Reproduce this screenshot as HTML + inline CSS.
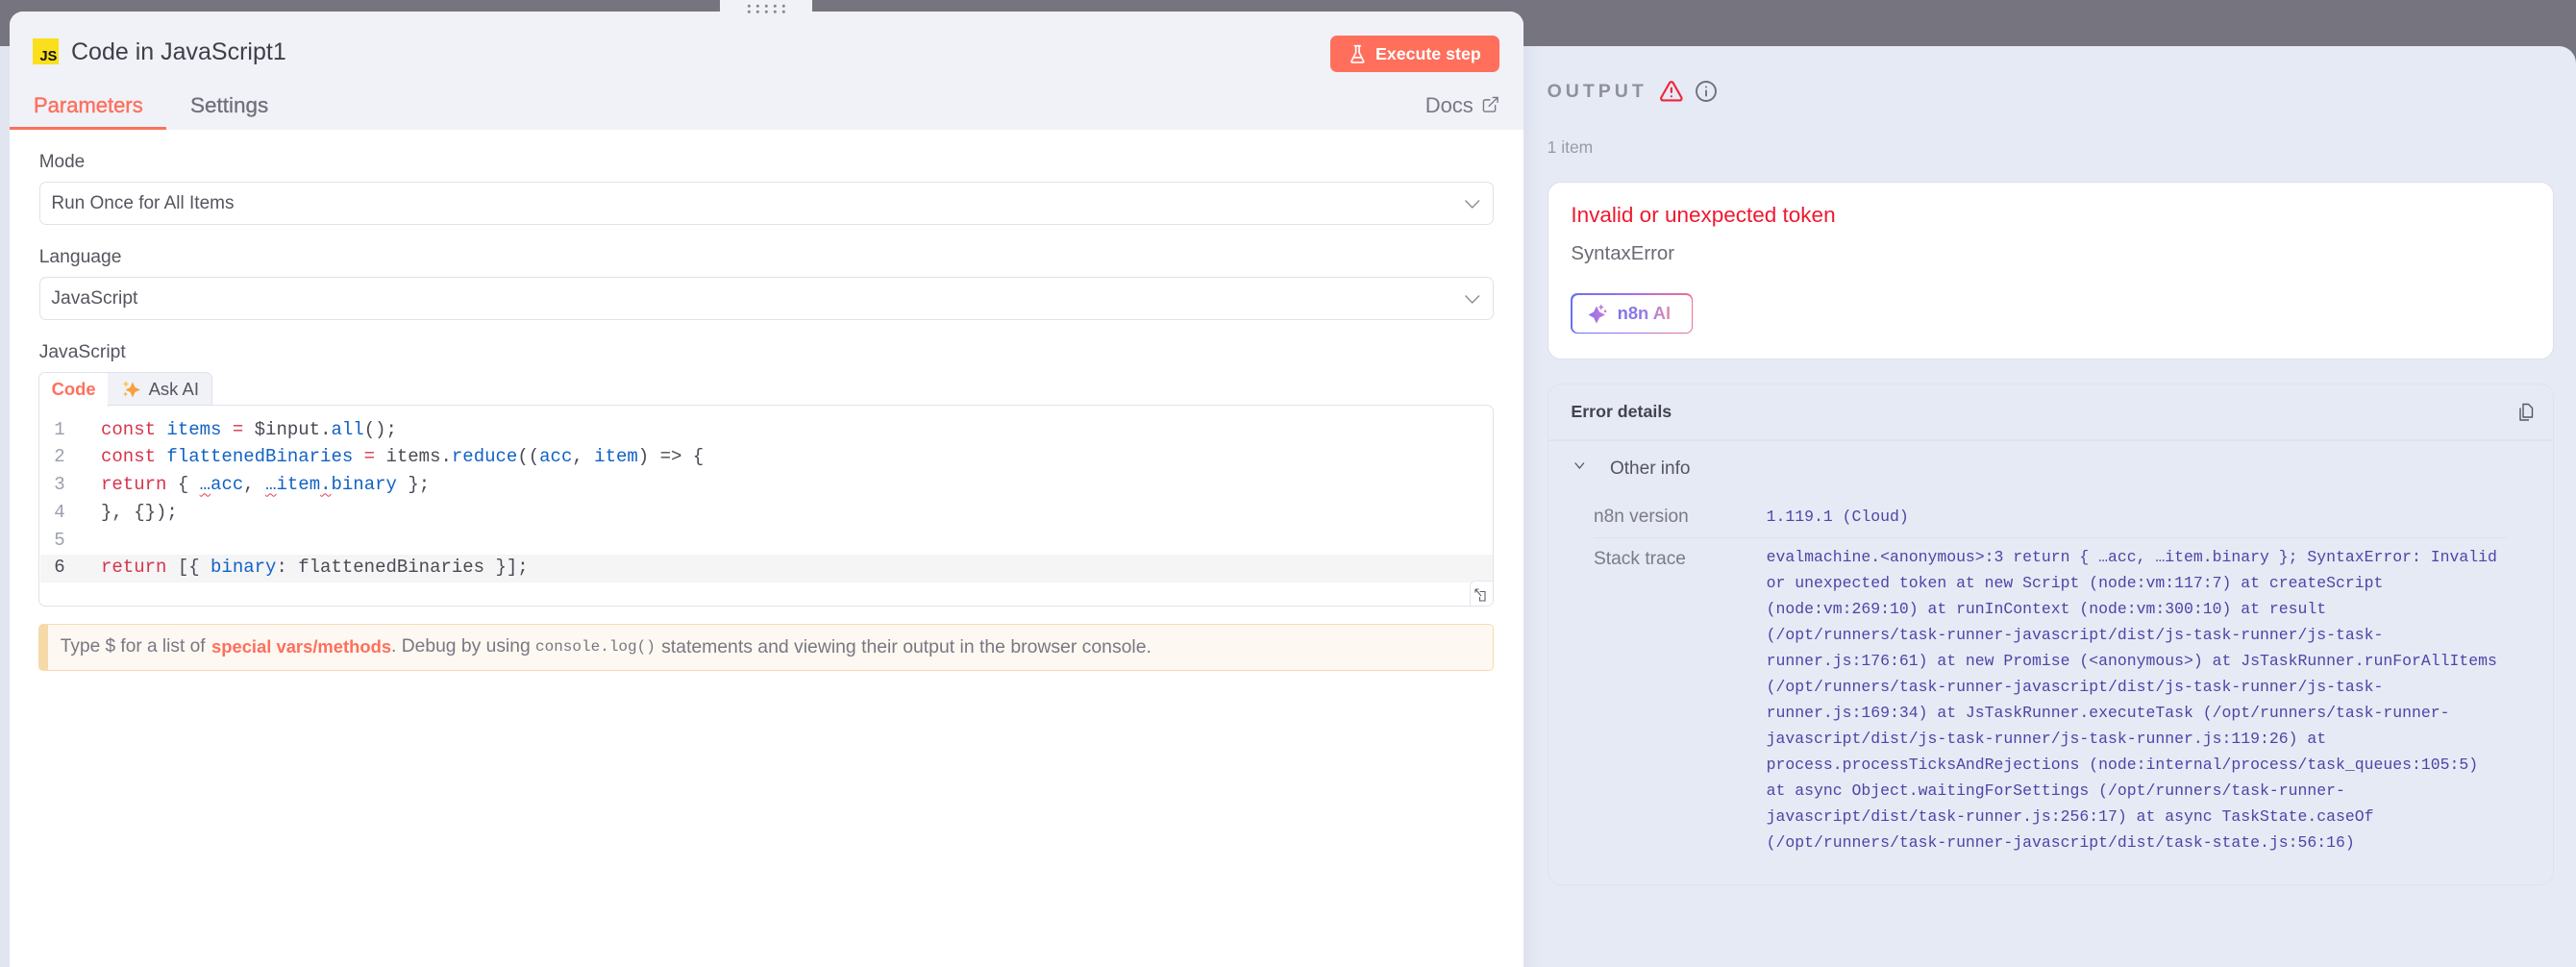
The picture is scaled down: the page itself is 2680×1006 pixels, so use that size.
<!DOCTYPE html>
<html lang="en">
<head>
<meta charset="utf-8">
<title>Code in JavaScript1</title>
<style>
html,body{margin:0;padding:0;width:2680px;height:1006px;overflow:hidden;background:#76757f}
body{position:relative;font-family:"Liberation Sans",sans-serif;color:#55555f}
.a{position:absolute;box-sizing:border-box}
.t{position:absolute;white-space:pre;line-height:30px;height:30px}
.m{font-family:"Liberation Mono",monospace}
.code{position:absolute;left:105px;font-family:"Liberation Mono",monospace;font-size:19px;line-height:28.7px;height:28.7px;white-space:pre;color:#4a4a55}
.ln{position:absolute;left:40px;width:44px;text-align:center;font-family:"Liberation Mono",monospace;font-size:19px;line-height:28.7px;color:#9ba0ad}
.k{color:#d7344b}
.b{color:#1262c4}
.w{text-decoration:underline wavy #e0404f 1px;text-underline-offset:3px}
.st{position:absolute;left:1837.6px;font-family:"Liberation Mono",monospace;font-size:16.47px;line-height:27px;height:27px;white-space:pre;color:#4c45a8}
.sel{position:absolute;left:41px;width:1513px;height:45px;background:#fff;border:1.5px solid #dfe2eb;border-radius:7px;box-sizing:border-box}
svg{position:absolute;overflow:visible}
</style>
</head>
<body>
<!-- backdrop panels -->
<div class="a" style="left:0;top:48px;width:2680px;height:958px;background:#e6eaf4;border-top-right-radius:18px"></div>
<div class="a" style="left:0;top:48px;width:12px;height:958px;background:#e1e5ef"></div>
<div class="a" style="left:1585px;top:48px;width:18px;height:958px;background:linear-gradient(90deg,#dde1ed,#e6eaf4)"></div>

<!-- left panel -->
<div class="a" style="left:10px;top:12px;width:1575px;height:994px;background:#fff;border-radius:14px 14px 0 0;overflow:hidden">
  <div class="a" style="left:0;top:0;width:1575px;height:123px;background:#f0f2f8"></div>
  <div class="a" style="left:0;top:120px;width:163px;height:3px;background:#ff6f5c"></div>
</div>

<!-- drag handle -->
<div class="a" style="left:749px;top:0;width:96px;height:14px;background:#f0f2f8"></div>
<svg style="left:0;top:0" width="2680" height="20" fill="#85858f">
<circle cx="779.3" cy="6.3" r="1.5"/><circle cx="788.3" cy="6.3" r="1.5"/><circle cx="797.3" cy="6.3" r="1.5"/><circle cx="806.3" cy="6.3" r="1.5"/><circle cx="815.3" cy="6.3" r="1.5"/>
<circle cx="779.3" cy="12.3" r="1.5"/><circle cx="788.3" cy="12.3" r="1.5"/><circle cx="797.3" cy="12.3" r="1.5"/><circle cx="806.3" cy="12.3" r="1.5"/><circle cx="815.3" cy="12.3" r="1.5"/>
</svg>

<!-- header -->
<div class="a" style="left:34px;top:40px;width:27px;height:27px;background:#f9df1c"></div>
<div class="t" style="left:41.5px;top:46px;font-size:14.5px;font-weight:700;color:#111;line-height:26px;height:26px">JS</div>
<div class="t" style="left:74px;top:39px;font-size:25px;color:#3f3f49;line-height:30px">Code in JavaScript1</div>

<div class="a" style="left:1384px;top:37px;width:176px;height:38px;background:#ff6f5c;border-radius:7px"></div>
<svg style="left:1401.6px;top:45.6px" width="20.7" height="20.7" viewBox="0 0 24 24" fill="none" stroke="#fff" stroke-width="1.9" stroke-linecap="round" stroke-linejoin="round"><path d="M10 2v7.527a2 2 0 0 1-.211.896L4.72 20.55a1 1 0 0 0 .9 1.45h12.76a1 1 0 0 0 .9-1.45l-5.069-10.127A2 2 0 0 1 14 9.527V2"/><path d="M8.5 2h7"/><path d="M7 16h10"/></svg>
<div class="t" style="left:1431px;top:41px;font-size:17.8px;font-weight:700;color:#fff">Execute step</div>

<div class="t" style="left:35px;top:95px;font-size:22px;color:#ff6f5c;-webkit-text-stroke:.4px #ff6f5c">Parameters</div>
<div class="t" style="left:198px;top:95px;font-size:22.5px;color:#6f6f7a;-webkit-text-stroke:.3px #6f6f7a">Settings</div>
<div class="t" style="left:1482.7px;top:95px;font-size:22px;color:#777883">Docs</div>
<svg style="left:1541px;top:98.5px" width="19.5" height="19.5" viewBox="0 0 24 24" fill="none" stroke="#777883" stroke-width="1.7" stroke-linecap="round" stroke-linejoin="round"><path d="M15 3h6v6"/><path d="M10 14 21 3"/><path d="M18 13v6a2 2 0 0 1-2 2H5a2 2 0 0 1-2-2V8a2 2 0 0 1 2-2h6"/></svg>

<!-- mode -->
<div class="t" style="left:40.7px;top:154px;font-size:19px;color:#55555f">Mode</div>
<div class="sel" style="top:189px"></div>
<div class="t" style="left:53.4px;top:197px;font-size:19px;color:#55555f">Run Once for All Items</div>
<svg style="left:1524px;top:208px" width="16" height="9" fill="none" stroke="#85858f" stroke-width="1.3"><path d="M.5.5 7.7 8 15 .5"/></svg>

<!-- language -->
<div class="t" style="left:40.7px;top:253px;font-size:19.3px;color:#55555f">Language</div>
<div class="sel" style="top:288px"></div>
<div class="t" style="left:53.4px;top:296px;font-size:19.3px;color:#55555f">JavaScript</div>
<svg style="left:1524px;top:307px" width="16" height="9" fill="none" stroke="#85858f" stroke-width="1.3"><path d="M.5.5 7.7 8 15 .5"/></svg>

<!-- JS editor -->
<div class="t" style="left:40.7px;top:352px;font-size:19.3px;color:#55555f">JavaScript</div>
<div class="a" style="left:40px;top:421px;width:1514px;height:210px;background:#fff;border:1.5px solid #dfe2eb;border-radius:0 7px 7px 7px"></div>
<div class="a" style="left:40px;top:387px;width:73px;height:35.5px;background:#fff;border:1.5px solid #dfe2eb;border-bottom:0;border-radius:7px 0 0 0"></div>
<div class="a" style="left:112px;top:387px;width:109px;height:34.5px;background:#f0f2f8;border:1.5px solid #dfe2eb;border-left:0;border-radius:0 7px 0 0"></div>
<div class="t" style="left:53.6px;top:390px;font-size:18.4px;font-weight:700;color:#ff6f5c">Code</div>
<svg style="left:127px;top:396px" width="20" height="18" viewBox="0 0 20 18"><path d="M11 1.500 13.500 7 19 9.500 13.500 12 11 17.500 8.500 12 3.500 9.500 8.500 7Z" fill="#f7a03a"/><path d="M4 0 5 2.500 7.500 3.500 5 4.500 4 7 3 4.500.5 3.500 3 2.500Z" fill="#f9c64a"/><path d="M3.500 11.500 4.300 13.300 6 14 4.300 14.700 3.500 16.500 2.700 14.700 1 14 2.700 13.300Z" fill="#f9b23f"/></svg>
<div class="t" style="left:154.600px;top:390px;font-size:18.5px;color:#55555f">Ask AI</div>

<div class="a" style="left:41.500px;top:577px;width:1511px;height:28.700px;background:#f5f5f6"></div>
<div class="ln" style="top:433.400px">1</div>
<div class="ln" style="top:461.400px">2</div>
<div class="ln" style="top:490.400px">3</div>
<div class="ln" style="top:519px">4</div>
<div class="ln" style="top:548px">5</div>
<div class="ln" style="top:576.400px;color:#4a4a55">6</div>
<div class="code" style="top:433.400px"><span class="k">const</span> <span class="b">items</span> <span class="k">=</span> $input.<span class="b">all</span>();</div>
<div class="code" style="top:461.400px"><span class="k">const</span> <span class="b">flattenedBinaries</span> <span class="k">=</span> items.<span class="b">reduce</span>((<span class="b">acc</span>, <span class="b">item</span>) =&gt; {</div>
<div class="code" style="top:490.400px"><span class="k">return</span> { <span class="b w">…</span><span class="b">acc</span>, <span class="b w">…</span><span class="b">item</span><span class="b w">.</span><span class="b">binary</span> };</div>
<div class="code" style="top:519px">}, {});</div>
<div class="code" style="top:576.400px"><span class="k">return</span> [{ <span class="b">binary</span>: flattenedBinaries }];</div>

<div class="a" style="left:1528.600px;top:604px;width:24.400px;height:25.500px;background:#fff;border-left:1.500px solid #e4e6ee;border-top:1.500px solid #e4e6ee;border-radius:6px 0 6px 0"></div>
<svg style="left:1533.500px;top:611.500px" width="13" height="14" viewBox="0 0 13 14" fill="none" stroke="#5d5d68" stroke-width="1.100"><path d="M1 1 7 8M1 1v3.500M1 1h3.500"/><path d="M5.500 3.500H11V13H5.500V9"/></svg>

<!-- notice -->
<div class="a" style="left:40px;top:649px;width:1514px;height:49px;background:#fdf8f1;border:1.500px solid #f5dcae;border-left:10px solid #f5d9a8;border-radius:5px"></div>
<div class="t" style="left:62.800px;top:658px;font-size:19.100px;color:#787883">Type $ for a list of </div>
<div class="t" style="left:220px;top:658px;font-size:18.400px;font-weight:700;color:#ff6f5c">special vars/methods</div>
<div class="t" style="left:407px;top:658px;font-size:19.300px;color:#787883">. Debug by using </div>
<div class="t m" style="left:557px;top:658px;font-size:16px;color:#787883">console.log()</div>
<div class="t" style="left:682.700px;top:658px;font-size:19.400px;color:#787883"> statements and viewing their output in the browser console.</div>

<!-- output header -->
<div class="t" style="left:1609.600px;top:80px;font-size:19.500px;font-weight:700;letter-spacing:4px;color:#8f909b">OUTPUT</div>
<svg style="left:1726.200px;top:82.200px" width="25.700" height="25.700" viewBox="0 0 24 24" fill="none" stroke="#f0243a" stroke-width="2" stroke-linecap="round" stroke-linejoin="round"><path d="m21.730 18-8-14a2 2 0 0 0-3.480 0l-8 14A2 2 0 0 0 4 21h16a2 2 0 0 0 1.730-3"/><path d="M12 9v4"/><path d="M12 17h.01"/></svg>
<svg style="left:1762px;top:82px" width="26" height="26" viewBox="0 0 26 26" fill="none" stroke="#6f707b" stroke-width="1.900" stroke-linecap="round"><circle cx="13" cy="13" r="10"/><path d="M13 12.500v5"/><path d="M13 8.500h.01"/></svg>
<div class="t" style="left:1609.600px;top:138px;font-size:17.500px;color:#9a9ba5">1 item</div>

<!-- error card -->
<div class="a" style="left:1609.600px;top:189.300px;width:1047px;height:185px;background:#fff;border:1.500px solid #dce0ea;border-radius:14px"></div>
<div class="t" style="left:1634.400px;top:209px;font-size:22.500px;color:#f0182f">Invalid or unexpected token</div>
<div class="t" style="left:1634.400px;top:249px;font-size:20.400px;color:#6b6b76">SyntaxError</div>
<div class="a" style="left:1634px;top:305px;width:127px;height:42px;border-radius:7px;background:linear-gradient(90deg,#6a72f0,#a06ff0 50%,#f0708c)"></div>
<div class="a" style="left:1635.500px;top:306.500px;width:124px;height:39px;border-radius:6px;background:#fff"></div>
<svg style="left:1650px;top:315px" width="26" height="24" viewBox="0 0 26 24"><defs><linearGradient id="g" x1="0" y1="0" x2="1" y2="0"><stop offset="0" stop-color="#8f6ff2"/><stop offset="1" stop-color="#c878d8"/></linearGradient></defs><path d="M11 3.500 14 9.500 20 12.500 14 15.500 11 21.500 8 15.500 2.500 12.500 8 9.500Z" fill="url(#g)"/><path d="M15.700 2v5M13.200 4.500h5" stroke="#b274e0" stroke-width="1.300"/><circle cx="20" cy="8.800" r="1.300" fill="#cc7cc8"/></svg>
<div class="t" style="left:1682.600px;top:311px;font-size:18.400px;font-weight:700;background:linear-gradient(90deg,#7d72f0,#8f78f0 45%,#e38cb0);-webkit-background-clip:text;background-clip:text;color:transparent">n8n AI</div>

<!-- error details -->
<div class="a" style="left:1609.600px;top:399.300px;width:1047px;height:521.500px;border:1.500px solid #dfe3ee;border-radius:14px"></div>
<div class="a" style="left:1611px;top:457px;width:1044px;height:1.500px;background:#dfe3ee"></div>
<div class="t" style="left:1634.400px;top:413px;font-size:17.800px;font-weight:700;color:#44444f">Error details</div>
<svg style="left:2619px;top:419px" width="18" height="20" viewBox="0 0 18 20" fill="none" stroke="#55555f" stroke-width="1.400" stroke-linejoin="round"><path d="M6 1.500h5.500L15.500 5.500V15H6Z"/><path d="M3 5.500V18H12"/></svg>
<svg style="left:1638px;top:481px" width="11" height="7" fill="none" stroke="#55555f" stroke-width="1.300"><path d="M.7.500 5.300 6 9.900.500"/></svg>
<div class="t" style="left:1675px;top:473px;font-size:19px;color:#55555f">Other info</div>
<div class="t" style="left:1658px;top:523px;font-size:19.100px;color:#7b7b86">n8n version</div>
<div class="st" style="top:524px">1.119.1 (Cloud)</div>
<div class="a" style="left:1658px;top:558.500px;width:950px;height:1.500px;background:#dce0eb"></div>
<div class="t" style="left:1658px;top:567px;font-size:19.200px;color:#7b7b86">Stack trace</div>
<div class="st" style="top:566.200px">evalmachine.&lt;anonymous&gt;:3 return { …acc, …item.binary }; SyntaxError: Invalid</div>
<div class="st" style="top:593.200px">or unexpected token at new Script (node:vm:117:7) at createScript</div>
<div class="st" style="top:620.200px">(node:vm:269:10) at runInContext (node:vm:300:10) at result</div>
<div class="st" style="top:647.200px">(/opt/runners/task-runner-javascript/dist/js-task-runner/js-task-</div>
<div class="st" style="top:674.200px">runner.js:176:61) at new Promise (&lt;anonymous&gt;) at JsTaskRunner.runForAllItems</div>
<div class="st" style="top:701.200px">(/opt/runners/task-runner-javascript/dist/js-task-runner/js-task-</div>
<div class="st" style="top:728.200px">runner.js:169:34) at JsTaskRunner.executeTask (/opt/runners/task-runner-</div>
<div class="st" style="top:755.200px">javascript/dist/js-task-runner/js-task-runner.js:119:26) at</div>
<div class="st" style="top:782.200px">process.processTicksAndRejections (node:internal/process/task_queues:105:5)</div>
<div class="st" style="top:809.200px">at async Object.waitingForSettings (/opt/runners/task-runner-</div>
<div class="st" style="top:836.200px">javascript/dist/task-runner.js:256:17) at async TaskState.caseOf</div>
<div class="st" style="top:863.200px">(/opt/runners/task-runner-javascript/dist/task-state.js:56:16)</div>
</body>
</html>
